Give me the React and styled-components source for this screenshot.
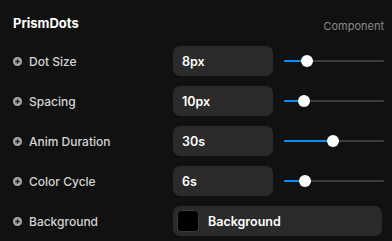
import React from 'react';
import styled, { createGlobalStyle } from 'styled-components';

const GlobalStyle = createGlobalStyle`
  body {
    margin: 0;
    background: #111111;
    font-family: Inter, "Noto Sans", sans-serif;
  }
`;

const Panel = styled.div`
  width: 392px;
  height: 241px;
  background: #111111;
  box-sizing: border-box;
  padding: 0 8px 0 13px;
`;

const Header = styled.div`
  height: 41px;
  display: flex;
  align-items: center;
  justify-content: space-between;
  padding-top: 4px;
  box-sizing: border-box;
`;

const Title = styled.div`
  color: #ffffff;
  font-weight: 700;
  font-size: 13px;
`;

const Tag = styled.div`
  color: #8a8a8a;
  font-size: 11px;
  margin-top: 6px;
`;

const Row = styled.div`
  height: 40px;
  display: flex;
  align-items: center;
`;

const Label = styled.div`
  width: 160px;
  display: flex;
  align-items: center;
  gap: 7px;
  color: #d4d4d4;
  font-size: 12px;
  font-weight: 500;
`;

const Control = styled.div`
  flex: 1;
  display: flex;
  align-items: center;
  gap: 11px;
`;

const Field = styled.div`
  width: ${p => (p.wide ? '209px' : '100px')};
  height: 30px;
  box-sizing: border-box;
  background: #2a2a2a;
  border-radius: 7px;
  display: flex;
  align-items: center;
  gap: 9px;
  padding-left: ${p => (p.wide ? '4px' : '9px')};
  color: #ffffff;
  font-weight: 600;
  font-size: 12.5px;
`;

const Swatch = styled.div`
  width: 22px;
  height: 22px;
  box-sizing: border-box;
  border-radius: 4px;
  background: #000000;
  border: 1px solid #3a3a3a;
`;

const Track = styled.div`
  position: relative;
  flex: 1;
  height: 2px;
  background: #3c3c3c;
  border-radius: 1px;
`;

const Fill = styled.div`
  position: absolute;
  left: 0;
  top: 0;
  height: 2px;
  background: #0a8fff;
  border-radius: 1px;
`;

const Thumb = styled.div`
  position: absolute;
  top: -5px;
  width: 12px;
  height: 12px;
  margin-left: -6px;
  border-radius: 50%;
  background: #ffffff;
`;

const PlusIcon = () => (
  <svg width="9" height="9" viewBox="0 0 10 10">
    <circle cx="5" cy="5" r="5" fill="#a8a8a8" />
    <path d="M5 2.5v5M2.5 5h5" stroke="#111" strokeWidth="1.4" />
  </svg>
);

const Slider = ({ pos }) => (
  <Track>
    <Fill style={{ width: pos }} />
    <Thumb style={{ left: pos }} />
  </Track>
);

const rows = [
  { label: 'Dot Size', value: '8px', pos: 23 },
  { label: 'Spacing', value: '10px', pos: 20 },
  { label: 'Anim Duration', value: '30s', pos: 49 },
  { label: 'Color Cycle', value: '6s', pos: 21 },
];

export default function App() {
  return (
    <Panel>
      <GlobalStyle />
      <Header>
        <Title>PrismDots</Title>
        <Tag>Component</Tag>
      </Header>
      {rows.map(r => (
        <Row key={r.label}>
          <Label>
            <PlusIcon />
            {r.label}
          </Label>
          <Control>
            <Field>{r.value}</Field>
            <Slider pos={r.pos} />
          </Control>
        </Row>
      ))}
      <Row>
        <Label>
          <PlusIcon />
          Background
        </Label>
        <Control>
          <Field wide>
            <Swatch />
            Background
          </Field>
        </Control>
      </Row>
    </Panel>
  );
}
